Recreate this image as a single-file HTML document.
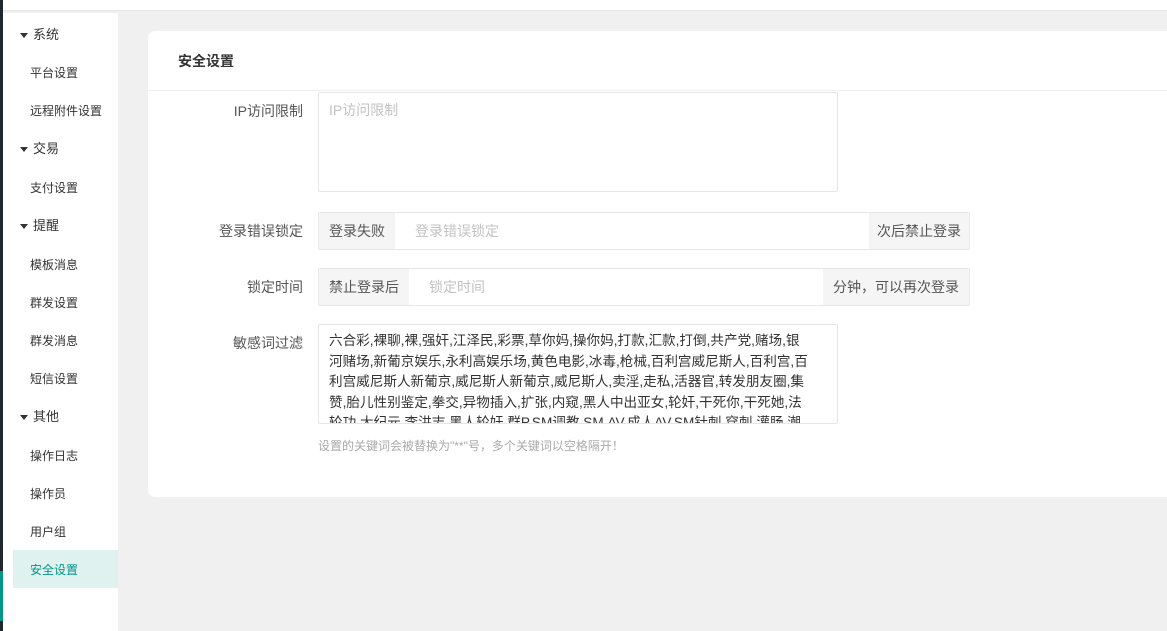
<!DOCTYPE html>
<html><head><meta charset="utf-8"><style>
*{box-sizing:border-box;margin:0;padding:0}
body{width:1167px;height:631px;overflow:hidden;background:#f0f0f0;font-family:"Liberation Sans","Noto Sans CJK SC",sans-serif;font-size:13px;color:#333;position:relative}
.top{position:absolute;left:0;top:0;width:1167px;height:11px;background:#fff;border-bottom:1px solid #e6e6e6}
.strip{position:absolute;left:0;top:0;width:3px;height:631px;background:#23262e}
.strip2{position:absolute;left:0;top:571px;width:3px;height:50px;background:#009688}
.side{position:absolute;left:3px;top:13px;width:115px;height:618px;background:#fff}
.side div{position:absolute;left:0;width:115px;height:38px;line-height:40px;font-size:12px;color:#333}
.side .g{padding-left:30px;font-size:13px}
.side .g:before{content:"";position:absolute;left:17px;top:18px;border-left:4px solid transparent;border-right:4px solid transparent;border-top:5px solid #333}
.side .i{padding-left:27px}
.side .act{background:#e0f2f0;color:#009688;left:10px;width:105px;padding-left:17px}
.card{position:absolute;left:148px;top:31px;width:1030px;height:466px;background:#fff;border-radius:7px}
.hd{height:60px;line-height:61px;padding-left:30px;font-weight:bold;font-size:14px;border-bottom:1px solid #f0f0f0;color:#333}
.lab{position:absolute;width:155px;left:0;text-align:right;color:#555;font-size:14px}
.ta{position:absolute;left:170px;width:520px;border:1px solid #e6e6e6;border-radius:2px}
.grp{position:absolute;left:170px;width:652px;height:38px;border:1px solid #e6e6e6;border-radius:2px;display:flex;line-height:36px;font-size:14px}
.grp .a{background:#f5f5f5;color:#555;padding:0 10px}
.grp .m{flex:1;color:#c2c2c2;padding-left:20px}
</style></head><body>
<div class="top"></div>
<div class="side">
<div class="g" style="top:2px">系统</div>
<div class="i" style="top:40px">平台设置</div>
<div class="i" style="top:78px">远程附件设置</div>
<div class="g" style="top:116px">交易</div>
<div class="i" style="top:155px">支付设置</div>
<div class="g" style="top:193px">提醒</div>
<div class="i" style="top:232px">模板消息</div>
<div class="i" style="top:270px">群发设置</div>
<div class="i" style="top:308px">群发消息</div>
<div class="i" style="top:346px">短信设置</div>
<div class="g" style="top:384px">其他</div>
<div class="i" style="top:423px">操作日志</div>
<div class="i" style="top:461px">操作员</div>
<div class="i" style="top:499px">用户组</div>
<div class="act" style="top:537px">安全设置</div>
</div>
<div class="strip"></div><div class="strip2"></div>
<div class="card">
<div class="hd">安全设置</div>
<div class="lab" style="top:70px">IP访问限制</div>
<div class="ta" style="top:61px;height:100px;padding:7px 10px;color:#c2c2c2;font-size:14px">IP访问限制</div>
<div class="lab" style="top:190px">登录错误锁定</div>
<div class="grp" style="top:181px"><span class="a">登录失败</span><span class="m">登录错误锁定</span><span class="a" style="padding:0 8px">次后禁止登录</span></div>
<div class="lab" style="top:246px">锁定时间</div>
<div class="grp" style="top:237px"><span class="a">禁止登录后</span><span class="m">锁定时间</span><span class="a">分钟，可以再次登录</span></div>
<div class="lab" style="top:302px">敏感词过滤</div>
<div class="ta" style="top:293px;height:100px;padding:6px 10px 0;line-height:20.5px;overflow:hidden;font-size:13.6px;color:#333;white-space:nowrap">六合彩,裸聊,裸,强奸,江泽民,彩票,草你妈,操你妈,打款,汇款,打倒,共产党,赌场,银<br>河赌场,新葡京娱乐,永利高娱乐场,黄色电影,冰毒,枪械,百利宫威尼斯人,百利宫,百<br>利宫威尼斯人新葡京,威尼斯人新葡京,威尼斯人,卖淫,走私,活器官,转发朋友圈,集<br>赞,胎儿性别鉴定,拳交,异物插入,扩张,内窥,黑人中出亚女,轮奸,干死你,干死她,法<br>轮功,大纪元,李洪志,黑人轮奸,群P,SM调教,SM,AV,成人AV,SM针刺,穿刺,灌肠,潮</div>
<div style="position:absolute;left:170px;top:406px;font-size:12px;color:#aaa">设置的关键词会被替换为"**"号，多个关键词以空格隔开！</div>
</div>
</body></html>
